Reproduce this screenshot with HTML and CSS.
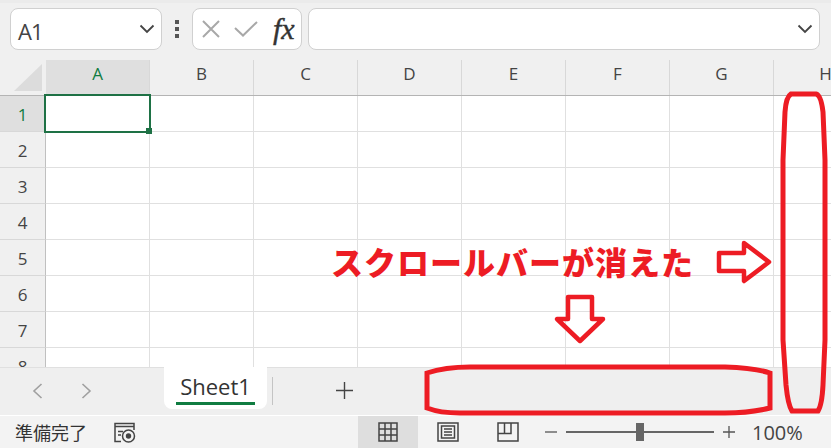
FILE: index.html
```html
<!DOCTYPE html>
<html lang="ja">

<head>
    <meta charset="UTF-8">
    <meta name="viewport" content="width=device-width, initial-scale=1.0">
    <title>Sheet1</title>
    <link rel="stylesheet" href="styles.css">
</head>

<body>
    <div class="formula-bar">
        <div class="box name-box">
            <span>A1</span>
            <svg class="chevron" width="16" height="10" viewBox="0 0 16 10"><path d="M1.5 1.5 L8 8 L14.5 1.5"/></svg>
        </div>
        <div class="dots"><i></i><i></i><i></i></div>
        <div class="box fx-box">
            <svg class="fx-icon" width="18" height="18" viewBox="0 0 18 18"><path d="M1 1 L17 17 M17 1 L1 17"/></svg>
            <svg class="fx-icon" width="24" height="16" viewBox="0 0 24 16"><path d="M1 7 L9 14.5 L23 1"/></svg>
            <span class="fx-label">fx</span>
        </div>
        <div class="box formula-input">
            <svg class="chevron" width="16" height="10" viewBox="0 0 16 10"><path d="M1.5 1.5 L8 8 L14.5 1.5"/></svg>
        </div>
    </div>

    <div class="sheet">
        <div class="row head-row">
            <div class="corner"><div class="triangle"></div></div>
            <div class="col-head active">A</div>
            <div class="col-head">B</div>
            <div class="col-head">C</div>
            <div class="col-head">D</div>
            <div class="col-head">E</div>
            <div class="col-head">F</div>
            <div class="col-head">G</div>
            <div class="col-head">H</div>
        </div>
        <div class="row"><div class="row-head active">1</div><div class="cell selected"><b></b></div><div class="cell"></div><div class="cell"></div><div class="cell"></div><div class="cell"></div><div class="cell"></div><div class="cell"></div><div class="cell"></div></div>
        <div class="row"><div class="row-head">2</div><div class="cell"></div><div class="cell"></div><div class="cell"></div><div class="cell"></div><div class="cell"></div><div class="cell"></div><div class="cell"></div><div class="cell"></div></div>
        <div class="row"><div class="row-head">3</div><div class="cell"></div><div class="cell"></div><div class="cell"></div><div class="cell"></div><div class="cell"></div><div class="cell"></div><div class="cell"></div><div class="cell"></div></div>
        <div class="row"><div class="row-head">4</div><div class="cell"></div><div class="cell"></div><div class="cell"></div><div class="cell"></div><div class="cell"></div><div class="cell"></div><div class="cell"></div><div class="cell"></div></div>
        <div class="row"><div class="row-head">5</div><div class="cell"></div><div class="cell"></div><div class="cell"></div><div class="cell"></div><div class="cell"></div><div class="cell"></div><div class="cell"></div><div class="cell"></div></div>
        <div class="row"><div class="row-head">6</div><div class="cell"></div><div class="cell"></div><div class="cell"></div><div class="cell"></div><div class="cell"></div><div class="cell"></div><div class="cell"></div><div class="cell"></div></div>
        <div class="row"><div class="row-head">7</div><div class="cell"></div><div class="cell"></div><div class="cell"></div><div class="cell"></div><div class="cell"></div><div class="cell"></div><div class="cell"></div><div class="cell"></div></div>
        <div class="row"><div class="row-head">8</div><div class="cell"></div><div class="cell"></div><div class="cell"></div><div class="cell"></div><div class="cell"></div><div class="cell"></div><div class="cell"></div><div class="cell"></div></div>
    </div>

    <div class="tab-bar">
        <div class="tab-nav">
            <svg class="nav-icon" width="11" height="16" viewBox="0 0 11 16"><path d="M9.5 1 L2 8 L9.5 15"/></svg>
            <svg class="nav-icon" width="11" height="16" viewBox="0 0 11 16"><path d="M1.5 1 L9 8 L1.5 15"/></svg>
        </div>
        <div class="tab"><span>Sheet1</span></div>
        <div class="tab-sep"></div>
        <svg class="add-sheet" width="17" height="17" viewBox="0 0 17 17"><path d="M8.5 0 V17 M0 8.5 H17"/></svg>
    </div>

    <div class="status-bar">
        <span class="status-text">準備完了</span>
        <svg class="macro-icon" width="23" height="21" viewBox="0 0 23 21">
            <path d="M8 19.5 H2 V1.5 H21 V8 M2 4.5 H21 M5 9.5 H10 M5 13 H8"/>
            <circle cx="15.5" cy="14" r="6"/>
            <circle class="solid" cx="15.5" cy="14" r="2.7"/>
        </svg>
        <div class="views">
            <div class="view selected">
                <svg width="20" height="20" viewBox="0 0 20 20"><path d="M1 1 H19 V19 H1 Z M7 1 V19 M13 1 V19 M1 7 H19 M1 13 H19"/></svg>
            </div>
            <div class="view">
                <svg width="22" height="20" viewBox="0 0 22 20"><path d="M1 1 H21 V19 H1 Z M4.500 4 H17.500 V16 H4.500 Z M7 7 H15 M7 10 H15 M7 13 H15"/></svg>
            </div>
            <div class="view">
                <svg width="22" height="20" viewBox="0 0 22 20"><path d="M1 1 H21 V19 H1 Z M1 11.500 H14 V1 M7.500 1 V11.500"/></svg>
            </div>
        </div>
        <div class="zoom-control">
            <svg class="zoom-btn" width="12" height="12" viewBox="0 0 12 12"><path d="M0 6 H12"/></svg>
            <div class="slider"><div class="thumb"></div></div>
            <svg class="zoom-btn" width="12" height="12" viewBox="0 0 12 12"><path d="M0 6 H12 M6 0 V12"/></svg>
        </div>
        <span class="zoom-value">100%</span>
    </div>

    <div class="note">スクロールバーが消えた</div>
    <svg class="marks" width="831" height="448" viewBox="0 0 831 448">
        <path d="M427 373 Q445 367 470 367 H725 Q755 368 770 373 V408 Q750 413 725 413 H460 Q440 413 427 408 Z"/>
        <path d="M791 94 H816 Q821 95 823 112 L825 160 V340 L823 385 Q822 405 818 411 H792 Q788 405 786 385 L783 340 V160 L785 112 Q786 97 791 94 Z"/>
        <path class="arrow" d="M719 253 H744 V243 L769 262 L744 281 V271 H719 Z"/>
        <path class="arrow" d="M568 297 H592 V319 H603 L580 341 L557 319 H568 Z"/>
    </svg>
</body>

</html>
```
FILE: styles.css
```css
* {
    box-sizing: border-box;
}

html,
body {
    height: 100%;
}

body {
    margin: 0;
    position: relative;
    display: flex;
    flex-direction: column;
    overflow: hidden;
    font-family: "Open Sans", "Noto Sans CJK JP", sans-serif;
    color: #444;
    background-color: #f0f0f0;
}

svg path {
    fill: none;
}

/* formula bar */
.formula-bar {
    flex: 0 0 60px;
    display: flex;
    align-items: flex-start;
    padding: 5px 11px 0 10px;
    border-top: 3px solid #ebebeb;
}

.box {
    height: 42px;
    display: flex;
    align-items: center;
    background-color: white;
    border: 1px solid #d0d0d0;
    border-radius: 8px;
}

.name-box {
    width: 152px;
    padding: 0 6px 0 7px;
    justify-content: space-between;
    font-size: 22px;
    letter-spacing: -1px;
}

.name-box span {
    margin-top: 3px;
}

.chevron path {
    stroke: #444;
    stroke-width: 1.8;
}

.dots {
    width: 30px;
    height: 42px;
    display: flex;
    flex-direction: column;
    align-items: center;
    justify-content: center;
    gap: 3px;
}

.dots i {
    width: 4px;
    height: 4px;
    background-color: #555;
}

.fx-box {
    width: 110px;
    padding-left: 9px;
    gap: 14px;
}

.fx-icon path {
    stroke: #a8a8a8;
    stroke-width: 2;
}

.fx-label {
    font-family: "Liberation Serif", serif;
    font-style: italic;
    font-size: 30px;
    line-height: 1;
    color: #333;
    margin-left: 1px;
    -webkit-text-stroke: 0.4px #333;
}

.formula-input {
    flex: 1;
    margin-left: 6px;
    padding-right: 6px;
    justify-content: flex-end;
}

/* sheet */
.sheet {
    flex: 1;
    min-height: 0;
    overflow: hidden;
    background-color: white;
}

.row {
    display: flex;
    height: 36px;
}

.head-row {
    background-color: #f0f0f0;
    border-bottom: 1px solid #b4b4b4;
}

.corner {
    flex: 0 0 46px;
    padding: 4px 4px 4px 14px;
}

.triangle {
    height: 100%;
    background-color: #dcdcdc;
    clip-path: polygon(100% 0, 100% 100%, 0 100%);
}

.col-head {
    flex: 0 0 104px;
    display: flex;
    align-items: center;
    justify-content: center;
    font-size: 17px;
    padding-bottom: 9px;
    border-right: 1px solid #d8d8d8;
}

.row-head {
    flex: 0 0 46px;
    display: flex;
    align-items: center;
    justify-content: center;
    font-size: 17px;
    padding-top: 1px;
    background-color: #f0f0f0;
    border-right: 1px solid #c0c0c0;
    border-bottom: 1px solid #d8d8d8;
}

.col-head.active,
.row-head.active {
    background-color: #dfdfdf;
    color: #107c41;
}

.cell {
    flex: 0 0 104px;
    position: relative;
    border-right: 1px solid #e0e0e0;
    border-bottom: 1px solid #e0e0e0;
}

.cell.selected {
    z-index: 1;
}

.cell.selected::before {
    content: "";
    position: absolute;
    top: -2px;
    left: -2px;
    right: -2px;
    bottom: -2px;
    border: 2px solid #1e7145;
}

.cell.selected b {
    position: absolute;
    right: -3px;
    bottom: -3px;
    width: 6px;
    height: 6px;
    background-color: #1e7145;
}

/* sheet tabs */
.tab-bar {
    flex: 0 0 48px;
    display: flex;
    align-items: flex-start;
    background-color: #efefef;
    border-top: 1px solid #e0e0e0;
}

.tab-nav {
    width: 164px;
    height: 46px;
    padding-left: 32px;
    display: flex;
    align-items: center;
    gap: 38px;
}

.nav-icon path {
    stroke: #a0a0a0;
    stroke-width: 1.6;
}

.tab {
    width: 103px;
    height: 42px;
    padding: 0 12px;
    background-color: white;
    border-radius: 0 0 8px 8px;
    margin-top: -1px;
}

.tab span {
    display: block;
    height: 38px;
    line-height: 38px;
    text-align: center;
    font-size: 22px;
    color: #333;
    border-bottom: 3px solid #107c41;
}

.tab-sep {
    width: 1px;
    height: 28px;
    margin: 9px 0 0 5px;
    background-color: #c4c4c4;
}

.add-sheet {
    margin: 14px 0 0 63px;
}

.add-sheet path {
    stroke: #444;
    stroke-width: 1.4;
}

/* status bar */
.status-bar {
    flex: 0 0 33px;
    display: flex;
    align-items: center;
    background-color: #f3f3f3;
    border-top: 1px solid white;
}

.status-text {
    width: 113px;
    padding-left: 15px;
    font-size: 18px;
    font-family: "Noto Sans CJK JP", sans-serif;
    color: #333;
}

.macro-icon path,
.macro-icon circle {
    fill: none;
    stroke: #444;
    stroke-width: 1.5;
}

.macro-icon .solid {
    fill: #444;
    stroke: none;
}

.views {
    display: flex;
    height: 100%;
    margin-left: 222px;
}

.view {
    width: 60px;
    display: flex;
    align-items: center;
    justify-content: center;
}

.view.selected {
    background-color: #dedede;
}

.view svg path {
    stroke: #444;
    stroke-width: 1.5;
}

.zoom-control {
    display: flex;
    align-items: center;
    gap: 9px;
    margin-left: 7px;
}

.zoom-btn path {
    stroke: #555;
    stroke-width: 1.3;
}

.slider {
    position: relative;
    width: 148px;
    height: 2px;
    background-color: #666;
}

.thumb {
    position: absolute;
    left: 70px;
    top: -8px;
    width: 8px;
    height: 18px;
    background-color: #666;
}

.zoom-value {
    margin-left: 17px;
    font-size: 20px;
    color: #444;
}

/* red notes painted on top of the screenshot */
.note {
    position: absolute;
    left: 331px;
    top: 239px;
    font-family: "Noto Sans CJK JP", sans-serif;
    font-weight: 900;
    font-size: 32px;
    line-height: 44px;
    letter-spacing: 1px;
    white-space: nowrap;
    color: #ed1c24;
}

.marks {
    position: absolute;
    left: 0;
    top: 0;
}

.marks path {
    stroke: #ed1c24;
    stroke-width: 5;
}

.marks .arrow {
    stroke-width: 4.5;
    stroke-linejoin: round;
}
```
